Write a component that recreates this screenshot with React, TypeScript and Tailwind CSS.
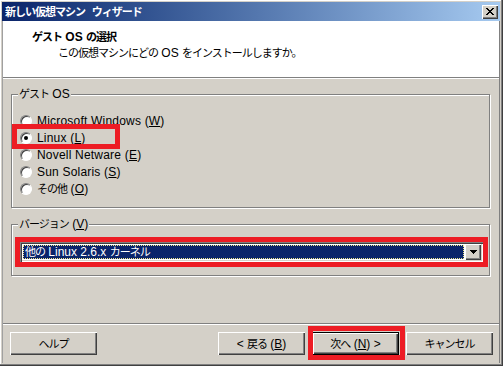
import React from 'react';

const FONT = { fontFamily: '"Liberation Sans", "Noto Sans CJK JP", sans-serif' };

// Japanese runs: the reference font has narrow kana, so shrink and tighten them
function J({ children }: { children: React.ReactNode }) {
  return <span className="text-[11px] tracking-[-1px]">{children}</span>;
}

function Key({ k }: { k: string }) {
  return (
    <>
      (<span className="underline underline-offset-[1px]">{k}</span>)
    </>
  );
}

function Radio({ checked, children }: { checked?: boolean; children: React.ReactNode }) {
  return (
    <div className="flex h-[17px] items-center gap-[5px]">
      <div className="flex h-[12px] w-[12px] items-center justify-center rounded-full border border-b-white border-l-[#808080] border-r-white border-t-[#808080] bg-white shadow-[inset_1px_1px_0_#404040]">
        {checked && <div className="h-[4px] w-[4px] rounded-full bg-black" />}
      </div>
      <span className="text-[12px] leading-none tracking-[0.2px] text-black">{children}</span>
    </div>
  );
}

function Group({ label, className, children }: { label: React.ReactNode; className: string; children: React.ReactNode }) {
  return (
    <div className={`relative w-[479px] border border-[#808080] shadow-[inset_1px_1px_0_#fff,1px_1px_0_#fff] ${className}`}>
      <span className="absolute -top-[8px] left-[6px] bg-[#d4d0c8] px-[1px] text-[12px] leading-[14px] text-black">{label}</span>
      {children}
    </div>
  );
}

function Btn({ children, def }: { children: React.ReactNode; def?: boolean }) {
  const face = def
    ? 'border border-black shadow-[inset_1px_1px_0_#fff,inset_-1px_-1px_0_#404040,inset_-2px_-2px_0_#808080]'
    : 'shadow-[inset_1px_1px_0_#fff,inset_-1px_-1px_0_#404040,inset_-2px_-2px_0_#808080]';
  return (
    <div className={`flex h-[23px] w-[87px] items-center justify-center bg-[#d4d0c8] text-[12px] text-black ${face}`}>
      <span className="whitespace-pre">{children}</span>
    </div>
  );
}

export default function App() {
  return (
    <div
      style={FONT}
      className="flex h-[366px] w-[503px] flex-col border-b border-r border-[#404040] bg-[#d4d0c8] p-[2px] shadow-[inset_-1px_-1px_0_#808080,inset_1px_1px_0_#fff]"
    >
      {/* title bar */}
      <div className="flex h-[19px] shrink-0 items-center justify-between bg-gradient-to-r from-[#0a246a] to-[#a6caf0] pl-[3px] pr-[2px]">
        <span className="whitespace-pre text-[12px] font-bold leading-none text-white">
          <J>新しい仮想マシン</J>{'  '}<J>ウィザード</J>
        </span>
        <div className="flex h-[14px] w-[16px] items-center justify-center bg-[#d4d0c8] shadow-[inset_1px_1px_0_#fff,inset_-1px_-1px_0_#404040,inset_-2px_-2px_0_#808080]">
          <svg width="8" height="7" viewBox="0 0 8 7" shapeRendering="crispEdges">
            <path d="M0 0h2v1h-2zM6 0h2v1h-2zM1 1h2v1h-2zM5 1h2v1h-2zM2 2h4v1h-4zM3 3h2v1h-2zM2 4h4v1h-4zM1 5h2v1h-2zM5 5h2v1h-2zM0 6h2v1h-2zM6 6h2v1h-2z" fill="#000" />
          </svg>
        </div>
      </div>

      {/* client */}
      <div className="flex flex-1 flex-col border-l border-r border-l-[#a0a0a0] border-r-[#808080]">
        {/* header */}
        <div className="h-[56px] shrink-0 bg-white pt-[9px]">
          <div className="pl-[29px] text-[12px] font-bold leading-[14px] text-black">
            <J>ゲスト</J> OS <J>の選択</J>
          </div>
          <div className="mt-[2px] pl-[55px] text-[12px] leading-[14px] text-black">
            <J>この仮想マシンにどの</J> OS <J>をインストールしますか。</J>
          </div>
        </div>
        <div className="h-[1px] shrink-0 bg-[#808080]" />
        <div className="h-[1px] shrink-0 bg-white" />

        {/* body */}
        <div className="flex-1 pl-[8px] pt-[15px]">
          <Group label={<><J>ゲスト</J> OS</>} className="h-[114px]">
            <div className="relative flex flex-col pl-[8px] pt-[17px]">
              <Radio>Microsoft Windows <Key k="W" /></Radio>
              <Radio checked>Linux <Key k="L" /></Radio>
              <Radio>Novell Netware <Key k="E" /></Radio>
              <Radio>Sun Solaris <Key k="S" /></Radio>
              <Radio><J>その他</J> <Key k="O" /></Radio>
              <div className="absolute left-0 top-[29px] h-[25px] w-[108px] border-[5px] border-[#ed1c24]" />
            </div>
          </Group>

          <Group label={<><J>バージョン</J> <Key k="V" /></>} className="mt-[16px] h-[52px]">
            <div className="pl-[8px] pt-[17px]">
              <div className="relative h-[20px] w-[463px]">
                <div className="absolute -inset-[5px] border-[5px] border-[#ed1c24]" />
                <div className="flex h-[20px] items-center bg-white p-[2px] shadow-[inset_1px_1px_0_#808080,inset_2px_2px_0_#404040,inset_-1px_-1px_0_#fff,inset_-2px_-2px_0_#d4d0c8]">
                  <div className="ml-[1px] flex h-[14px] flex-1 items-center border border-dotted border-[#f0e68c] bg-[#0a246a] pl-[1px] text-[12px] leading-none text-white">
                    <span className="whitespace-pre"><J>他の</J> Linux 2.6.x <J>カーネル</J></span>
                  </div>
                  <div className="ml-[1px] flex h-[16px] w-[16px] items-center justify-center bg-[#d4d0c8] shadow-[inset_1px_1px_0_#fff,inset_-1px_-1px_0_#404040,inset_-2px_-2px_0_#808080]">
                    <svg width="7" height="4" viewBox="0 0 7 4" shapeRendering="crispEdges">
                      <path d="M0 0h7v1h-7zM1 1h5v1h-5zM2 2h3v1h-3zM3 3h1v1h-1z" fill="#000" />
                    </svg>
                  </div>
                </div>
              </div>
            </div>
          </Group>
        </div>

        <div className="h-[1px] shrink-0 bg-[#808080]" />
        <div className="h-[1px] shrink-0 bg-white" />

        {/* buttons */}
        <div className="flex h-[38px] shrink-0 items-start pl-[7px] pr-[6px] pt-[7px]">
          <Btn><J>ヘルプ</J></Btn>
          <div className="flex-1" />
          <div className="flex gap-[7px]">
            <Btn>&lt; <J>戻る</J> <Key k="B" /></Btn>
            <div className="relative">
              <div className="absolute -bottom-[5px] -left-[4px] -right-[6px] -top-[6px] border-[5px] border-[#ed1c24]" />
              <Btn def><J>次へ</J> <Key k="N" /> &gt;</Btn>
            </div>
            <Btn><J>キャンセル</J></Btn>
          </div>
        </div>
      </div>
    </div>
  );
}
